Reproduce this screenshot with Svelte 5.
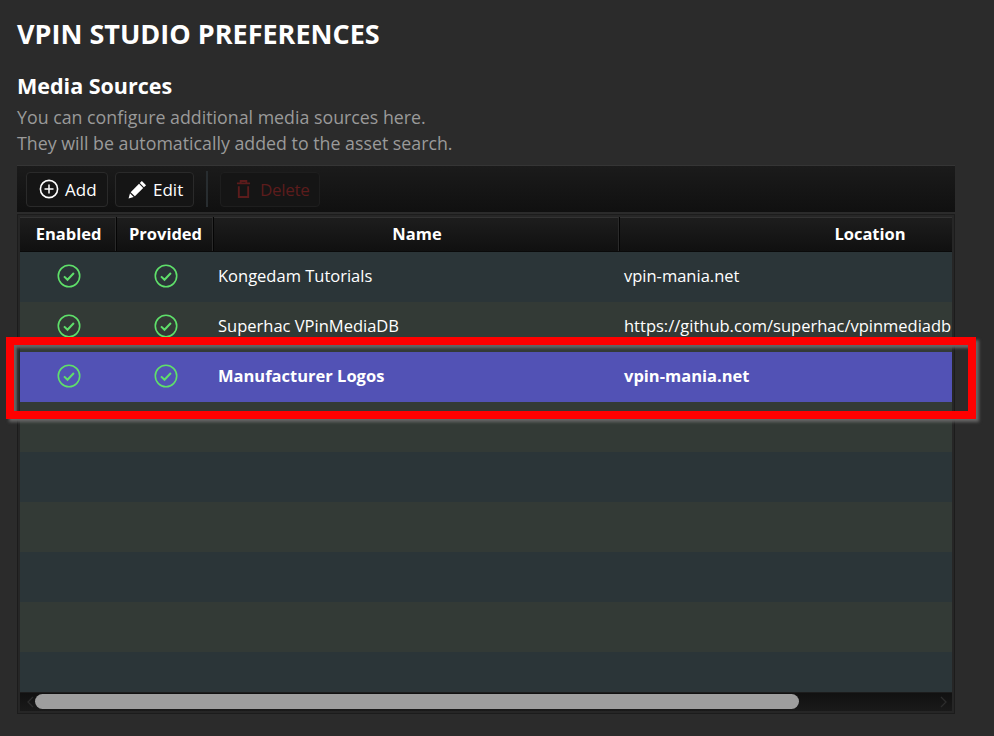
<script>
  // Media sources preferences page: toolbar plus a horizontally clipped table.
  const rows = [
    { name: 'Kongedam Tutorials', location: 'vpin-mania.net' },
    { name: 'Superhac VPinMediaDB', location: 'https://github.com/superhac/vpinmediadb' },
    { name: 'Manufacturer Logos', location: 'vpin-mania.net', selected: true }
  ];
  const blanks = [0, 1, 2, 3, 4, 5, 6];
</script>

{#snippet check()}
  <svg class="check" viewBox="0 0 24 24" width="24" height="24" aria-hidden="true">
    <circle cx="12" cy="12" r="10.7" fill="none" stroke="#5fe06a" stroke-width="1.6" />
    <path d="M7 12.4l3.5 3.4 6.4-6.8" fill="none" stroke="#5fe06a" stroke-width="2" />
  </svg>
{/snippet}

<main class="page">
  <h1>VPIN STUDIO PREFERENCES</h1>
  <h2>Media Sources</h2>
  <p class="hint">You can configure additional media sources here.</p>
  <p class="hint">They will be automatically added to the asset search.</p>

  <div class="toolbar">
    <button type="button" class="btn btn--add">
      <svg viewBox="0 0 20 20" width="20" height="20" aria-hidden="true">
        <circle cx="10" cy="10" r="8.6" fill="none" stroke="#fff" stroke-width="1.6" />
        <path d="M10 5.5v9M5.5 10h9" stroke="#fff" stroke-width="1.5" />
      </svg>
      Add
    </button>
    <button type="button" class="btn btn--edit">
      <svg viewBox="0 0 20 20" width="19" height="19" aria-hidden="true">
        <path d="M14.6 1l4.4 4.4-2.2 2.2-4.4-4.4zM11.6 4l4.4 4.4-8.8 8.8-4.4-4.4zM2.1 14l3.9 3.9L.6 19.4z" fill="#fff" />
      </svg>
      Edit
    </button>
    <span class="sep"></span>
    <button type="button" class="btn btn--off" disabled>
      <svg viewBox="0 0 16 20" width="15" height="20" aria-hidden="true">
        <path d="M1 4h14M5 4V1.5h6V4M3 7v11.5h10V7" fill="none" stroke="#5c1c1c" stroke-width="2" />
      </svg>
      Delete
    </button>
  </div>

  <div class="table">
    <div class="clip">
      <div class="row head">
        <div class="th">Enabled</div>
        <div class="th">Provided</div>
        <div class="th">Name</div>
        <div class="th">Location</div>
      </div>
      {#each rows as r}
        <div class="row" class:sel={r.selected}>
          <div class="td mid">{@render check()}</div>
          <div class="td mid">{@render check()}</div>
          <div class="td">{r.name}</div>
          <div class="td">{r.location}</div>
        </div>
      {/each}
      {#each blanks as b}
        <div class="row"></div>
      {/each}
    </div>
    <div class="scroll">
      <svg class="arrow" viewBox="0 0 8 12" width="8" height="12" aria-hidden="true"><path d="M7 1L2 6l5 5" fill="none" stroke="#2c2c2c" stroke-width="1.3" /></svg>
      <div class="thumb"></div>
      <svg class="arrow" viewBox="0 0 8 12" width="8" height="12" aria-hidden="true"><path d="M1 1l5 5-5 5" fill="none" stroke="#2c2c2c" stroke-width="1.3" /></svg>
    </div>
  </div>

  <!-- annotation drawn over the screenshot -->
  <div class="marker"></div>
</main>

<style>
  :global(body) {
    margin: 0;
    background: #2b2b2b;
  }

  .page {
    position: relative;
    box-sizing: border-box;
    width: 994px;
    height: 736px;
    overflow: hidden;
    padding: 16px 39px 0 17px;
    font-family: "Open Sans", "Noto Sans", sans-serif;
    color: #fff;
  }

  h1 {
    margin: 0;
    font-size: 27px;
    line-height: 36px;
    font-weight: 700;
  }

  h2 {
    margin: 20px 0 4px;
    font-size: 21.5px;
    line-height: 28px;
    font-weight: 700;
  }

  .hint {
    margin: 0;
    font-size: 17.8px;
    line-height: 26px;
    color: #9a9a9a;
  }

  .toolbar {
    box-sizing: border-box;
    height: 47px;
    margin-top: 9px;
    display: flex;
    align-items: center;
    gap: 7px;
    padding: 0 9px;
    border-top: 1px solid #353535;
    background: linear-gradient(#1b1b1b, #101010);
  }

  .btn {
    box-sizing: border-box;
    height: 35px;
    display: inline-flex;
    align-items: center;
    padding: 0 0 0 12px;
    border: 1px solid #2a2a2a;
    border-radius: 4px;
    background: #151515;
    color: #fff;
    font: 400 17px "Open Sans", sans-serif;
  }

  .btn--add {
    width: 82px;
    gap: 6px;
  }

  .btn--edit {
    width: 79px;
    gap: 6px;
  }

  .btn--off {
    width: 100px;
    gap: 9px;
    padding-left: 15px;
    color: #5c1c1c;
    border-color: #1e1e1e;
    letter-spacing: -0.3px;
  }

  .sep {
    width: 2px;
    height: 36px;
    margin: 0 5px;
    background: #282d30;
  }

  .table {
    box-sizing: border-box;
    height: 500px;
    margin-top: 2px;
    padding: 2px;
    border: 1px solid #1c1c1c;
    background: #262626;
    display: flex;
    flex-direction: column;
  }

  .clip {
    flex: 1;
    min-height: 0;
    overflow: hidden;
  }

  .row {
    display: grid;
    grid-template-columns: 97px 97px 406px 500px;
    width: 1100px;
    height: 50px;
    font-size: 16.5px;
    background: #2b3538;
  }

  .row:nth-child(odd) {
    background: #333a36;
  }

  .row.sel {
    background: #5252b5;
    font-weight: 700;
  }

  .head,
  .head:nth-child(odd) {
    height: 35px;
    background: #050505;
    border-bottom: 1px solid #0a0a0a;
    box-sizing: border-box;
    font-weight: 700;
  }

  .th {
    display: flex;
    align-items: center;
    justify-content: center;
    margin-right: 1px;
    padding: 0 0 2px 2px;
    border-top: 1px solid #333;
    border-right: 1px solid #2a2a2a;
    background: linear-gradient(#1d1d1d, #101010);
  }

  .td {
    display: flex;
    align-items: center;
    padding: 0 0 4px 4px;
    white-space: nowrap;
    overflow: hidden;
  }

  .mid {
    justify-content: center;
    padding: 0 0 3px 0;
  }

  .scroll {
    flex: none;
    height: 18px;
    display: flex;
    align-items: center;
    justify-content: space-between;
    padding: 0 4px 0 6px;
    background: linear-gradient(#111, #1a1a1a);
    border-top: 1px solid #1c1c1c;
    position: relative;
  }

  .thumb {
    position: absolute;
    left: 15px;
    top: 1px;
    width: 764px;
    height: 15px;
    border-radius: 8px;
    background: #9e9e9e;
  }

  .arrow {
    display: block;
  }

  .marker {
    position: absolute;
    left: 6px;
    top: 337px;
    width: 970px;
    height: 82px;
    box-sizing: border-box;
    border: 8px solid #f00;
    box-shadow: 3px 3px 3px #666, inset 3px 3px 3px #666;
    pointer-events: none;
  }
</style>
